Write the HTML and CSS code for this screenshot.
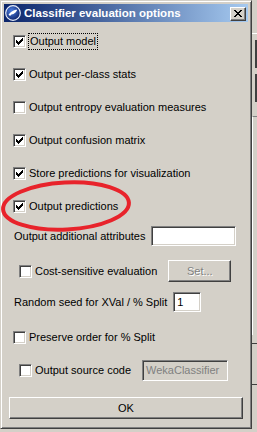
FILE: index.html
```html
<!DOCTYPE html>
<html lang="en">

<head>
    <meta charset="UTF-8">
    <title>Classifier evaluation options</title>
    <link rel="stylesheet" href="styles.css">
</head>

<body>
    <div class="screen">
        <div class="dialog">
            <div class="titlebar">
                <svg class="app-icon" width="16" height="16" viewBox="0 0 16 16">
                    <defs>
                        <radialGradient id="globe" cx="0.4" cy="0.35" r="0.7">
                            <stop offset="0" stop-color="#4d7fe0" />
                            <stop offset="1" stop-color="#0b1f66" />
                        </radialGradient>
                    </defs>
                    <circle cx="8" cy="8" r="7.3" fill="url(#globe)" stroke="#e8eefa" stroke-width="1.2" />
                    <path d="M3.5 9.5 L6 7 L8.5 5.5 L11.5 4.5 L12 5.5 L10.5 7.5 L8.5 9 L6.5 9.5 L5 11 L4.5 10.5 Z" fill="#fff" />
                </svg>
                <span class="title">Classifier evaluation options</span>
                <div class="close-btn">
                    <svg width="8" height="7" viewBox="0 0 8 7" shape-rendering="crispEdges">
                        <path d="M0 0h2v1h-2z M6 0h2v1h-2z M1 1h2v1h-2z M5 1h2v1h-2z M2 2h4v1h-4z M3 3h2v1h-2z M2 4h4v1h-4z M1 5h2v1h-2z M5 5h2v1h-2z M0 6h2v1h-2z M6 6h2v1h-2z" fill="#000" />
                    </svg>
                </div>
            </div>

            <div class="body">
                <div class="row">
                    <span class="box checked"></span>
                    <span class="focus">Output model</span>
                </div>
                <div class="row">
                    <span class="box checked"></span>
                    <span class="text">Output per-class stats</span>
                </div>
                <div class="row">
                    <span class="box"></span>
                    <span class="text">Output entropy evaluation measures</span>
                </div>
                <div class="row">
                    <span class="box checked"></span>
                    <span class="text">Output confusion matrix</span>
                </div>
                <div class="row">
                    <span class="box checked"></span>
                    <span class="text">Store predictions for visualization</span>
                </div>
                <div class="row">
                    <span class="box checked"></span>
                    <span class="text">Output predictions</span>
                </div>
                <div class="row row-attrs">
                    <span class="label">Output additional attributes</span>
                    <span class="field attrs-field"></span>
                </div>
                <div class="row row-cost indent">
                    <span class="box"></span>
                    <span class="text">Cost-sensitive evaluation</span>
                    <span class="button set-btn disabled">Set...</span>
                </div>
                <div class="row row-seed">
                    <span class="label">Random seed for XVal / % Split</span>
                    <span class="field seed-field">1</span>
                </div>
                <div class="row row-order">
                    <span class="box"></span>
                    <span class="text">Preserve order for % Split</span>
                </div>
                <div class="row row-source indent">
                    <span class="box"></span>
                    <span class="text">Output source code</span>
                    <span class="field source-field disabled">WekaClassifier</span>
                </div>
                <div class="row row-ok">
                    <span class="button ok-btn">OK</span>
                </div>
            </div>

            <svg class="annotation" width="136" height="58" viewBox="0 0 136 58">
                <ellipse cx="66" cy="28" rx="63" ry="23.5" fill="none" stroke="#e8232b" stroke-width="4" transform="rotate(-3 66 28)" />
            </svg>
        </div>

        <div class="backdrop">
            <div class="bd-top"></div>
            <div class="bd-btn"></div>
            <div class="bd-btn"></div>
            <div class="bd-panel"></div>
            <div class="bd-bar"></div>
        </div>
    </div>
</body>

</html>
```

FILE: styles.css
```css
body {
    margin: 0;
    background-color: #d4d0c8;
    font-family: "Liberation Sans", Arial, sans-serif;
    font-size: 11px;
    color: #000;
}

.screen {
    display: flex;
    width: 257px;
    height: 432px;
    overflow: hidden;
}

/* classic raised window frame */
.dialog {
    position: relative;
    width: 252px;
    height: 429px;
    box-sizing: border-box;
    padding: 3px;
    border: 1px solid;
    border-color: #d4d0c8 #404040 #404040 #d4d0c8;
    box-shadow: inset 1px 1px #fff, inset -1px -1px #808080;
    background-color: #d4d0c8;
    flex-shrink: 0;
}

.titlebar {
    height: 18px;
    display: flex;
    align-items: center;
    padding: 0 2px 0 1px;
    background: linear-gradient(to right, #0a246a, #a6caf0);
}

.app-icon {
    flex-shrink: 0;
}

.title {
    flex: 1;
    margin-left: 3px;
    color: #fff;
    font-weight: bold;
    font-size: 11.5px;
    white-space: nowrap;
}

.close-btn {
    width: 16px;
    height: 14px;
    box-sizing: border-box;
    margin-top: 1px;
    display: flex;
    align-items: center;
    justify-content: center;
    background-color: #d4d0c8;
    border: 1px solid;
    border-color: #fff #404040 #404040 #fff;
    box-shadow: inset -1px -1px #808080;
}

.body {
    display: flex;
    flex-direction: column;
    padding: 8px 0 0 9px;
}

.row {
    height: 22px;
    display: flex;
    align-items: center;
    margin-top: 11px;
    white-space: nowrap;
}

.row:first-child {
    margin-top: 0;
}

.indent {
    padding-left: 6px;
}

.row-attrs {
    margin-top: 8px;
}

.row-cost {
    margin-top: 13px;
}

.row-seed {
    margin-top: 9px;
}

.row-order {
    margin-top: 13px;
}

.row-ok {
    margin-top: 16px;
}

/* sunken checkbox */
.box {
    width: 13px;
    height: 13px;
    box-sizing: border-box;
    flex-shrink: 0;
    border: 1px solid;
    border-color: #808080 #fff #fff #808080;
    box-shadow: inset 1px 1px #404040, inset -1px -1px #d4d0c8;
    background-color: #fff;
}

.box.checked {
    background-image: url("data:image/svg+xml,%3Csvg xmlns='http://www.w3.org/2000/svg' width='7' height='7' shape-rendering='crispEdges'%3E%3Cpath d='M6 0h1v1h-1z M5 1h2v1h-2z M0 2h1v1h-1z M4 2h3v1h-3z M0 3h2v1h-2z M3 3h3v1h-3z M0 4h5v1h-5z M1 5h3v1h-3z M2 6h1v1h-1z'/%3E%3C/svg%3E");
    background-repeat: no-repeat;
    background-position: 2px 2px;
}

.text,
.focus {
    margin-left: 3px;
}

.focus {
    padding: 0 1px;
    line-height: 15px;
    border: 1px dotted #000;
    margin-left: 2px;
}

.label {
    margin-left: 1px;
}

/* sunken text field */
.field {
    box-sizing: border-box;
    height: 20px;
    display: flex;
    align-items: center;
    padding-left: 3px;
    border: 1px solid;
    border-color: #808080 #fff #fff #808080;
    box-shadow: inset 1px 1px #404040, inset -1px -1px #d4d0c8;
    background-color: #fff;
}

.field.disabled {
    background-color: #d4d0c8;
    color: #808080;
}

.attrs-field {
    width: 85px;
    margin-left: 6px;
}

.seed-field {
    width: 28px;
    margin-left: 6px;
}

.source-field {
    width: 86px;
    height: 21px;
    margin-left: 11px;
}

.button {
    box-sizing: border-box;
    height: 22px;
    display: flex;
    align-items: center;
    justify-content: center;
    background-color: #d4d0c8;
    border: 1px solid;
    border-color: #fff #404040 #404040 #fff;
    box-shadow: inset -1px -1px #808080;
}

.button.disabled {
    color: #808080;
    text-shadow: 1px 1px #fff;
}

.set-btn {
    width: 63px;
    margin-left: 11px;
}

.ok-btn {
    width: 234px;
    margin-left: -4px;
}

.annotation {
    position: absolute;
    left: -1px;
    top: 177px;
}

/* strip of the window behind */
.backdrop {
    flex: 1;
    display: flex;
    flex-direction: column;
}

.bd-top {
    height: 33px;
    border-bottom: 1px solid #fff;
}

.bd-btn {
    height: 28px;
    margin-top: 6px;
    border-right: 2px solid #404040;
}

.bd-panel {
    height: 218px;
    margin-top: 14px;
    border-left: 1px solid #fff;
    border-top: 1px solid #808080;
}

.bd-bar {
    height: 40px;
    margin-top: 8px;
    border-top: 1px solid #404040;
    border-bottom: 1px solid #404040;
}
```
